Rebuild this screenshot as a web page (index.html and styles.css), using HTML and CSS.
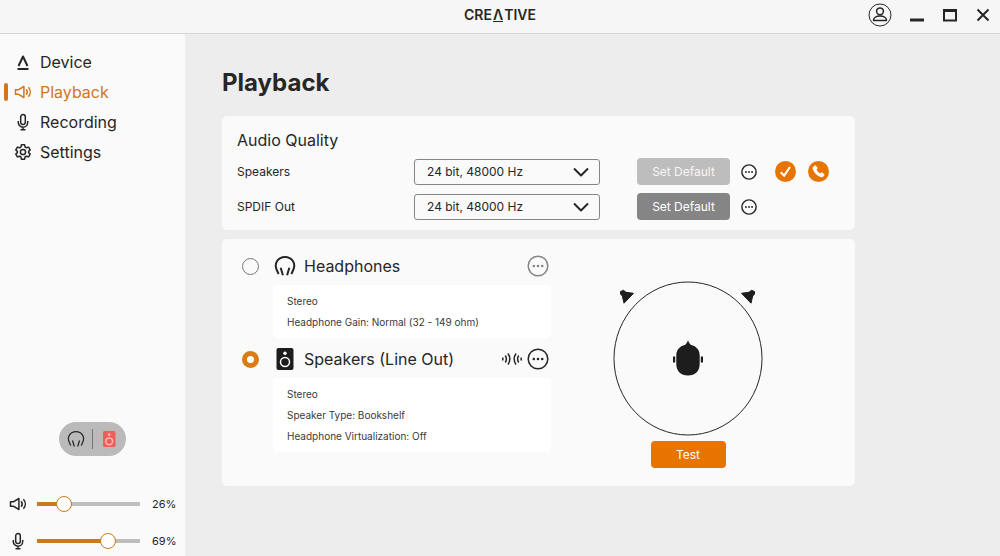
FILE: index.html
```html
<!DOCTYPE html>
<html lang="en">
<head>
  <meta charset="UTF-8" />
  <meta name="viewport" content="width=device-width, initial-scale=1.0" />
  <title>Creative - Playback</title>
  <link rel="stylesheet" href="styles.css">
</head>
<body>
  <!-- Shared icons -->
  <svg class="sprite" aria-hidden="true">
    <symbol id="icon-volume" viewBox="0 0 18 18">
      <path d="M1.500 6.700h3.200l5.200-3.200v11l-5.200-3.200H1.500z"/>
      <path d="M12.200 6.200c1.300 1.700 1.300 3.900 0 5.600M14.400 4.300c2.500 2.800 2.500 6.600 0 9.400"/>
    </symbol>
    <symbol id="icon-mic" viewBox="0 0 18 18">
      <rect x="6.700" y="1.500" width="4.600" height="10" rx="2.300"/>
      <path d="M4.300 8v1.500a4.700 4.700 0 0 0 9.400 0V8M9 14.200v2.500M6.500 16.700h5"/>
    </symbol>
    <symbol id="icon-headphones" viewBox="0 0 22 22">
      <path d="M4.600 19l-1.800-4C-.3 8.500 4 1.900 11 1.900S22.300 8.500 19.200 15l-1.800 4"/>
      <path d="M6.700 12.800l2.200 7.400M15.300 12.800l-2.200 7.400"/>
    </symbol>
    <symbol id="icon-more" viewBox="0 0 22 22">
      <circle cx="11" cy="11" r="9.800"/>
      <g fill="currentColor" stroke="none"><circle cx="6.800" cy="11" r="1.300"/><circle cx="11" cy="11" r="1.300"/><circle cx="15.200" cy="11" r="1.300"/></g>
    </symbol>
    <symbol id="icon-chevron" viewBox="0 0 16 10"><path d="M1 1.500l7 7 7-7"/></symbol>
  </svg>

  <header class="titlebar">
    <div class="logo" aria-label="Creative">CRE<span class="logo-mark">Λ</span>TIVE</div>
    <div class="window-controls">
      <button class="icon-btn" aria-label="Account">
        <svg class="icon account-icon" viewBox="0 0 24 24">
          <circle class="account-ring" cx="12" cy="12" r="11"/>
          <circle cx="12" cy="8.300" r="3.400"/>
          <path d="M5.500 17.500c0-6 13-6 13 0z"/>
        </svg>
      </button>
      <button class="icon-btn" aria-label="Minimize">
        <svg class="icon window-icon" viewBox="0 0 16 16"><path class="bold" d="M1 13h14"/></svg>
      </button>
      <button class="icon-btn" aria-label="Maximize">
        <svg class="icon window-icon" viewBox="0 0 16 16"><path d="M2 3h12v10.500H2z"/><path class="bold" d="M1 3.500h14"/></svg>
      </button>
      <button class="icon-btn" aria-label="Close">
        <svg class="icon window-icon" viewBox="0 0 16 16"><path d="M2.500 2.500l11 11M13.500 2.500l-11 11"/></svg>
      </button>
    </div>
  </header>

  <div class="app">
    <aside class="sidebar">
      <nav class="nav">
        <a class="nav-item" href="#device">
          <svg class="icon nav-icon" viewBox="0 0 18 18"><path class="bold" d="M4.500 13L9 3.500 13.500 13M3.500 16h11"/></svg>
          Device
        </a>
        <a class="nav-item active" href="#playback" aria-current="page">
          <svg class="icon nav-icon"><use href="#icon-volume"/></svg>
          Playback
        </a>
        <a class="nav-item" href="#recording">
          <svg class="icon nav-icon"><use href="#icon-mic"/></svg>
          Recording
        </a>
        <a class="nav-item" href="#settings">
          <svg class="icon nav-icon" viewBox="0 0 18 18">
            <path d="M7.400 1.800h3.200l.5 2.200 1.400.8 2.100-.7 1.600 2.800-1.600 1.500v1.200l1.600 1.500-1.600 2.800-2.100-.7-1.400.8-.5 2.200H7.400L6.900 14l-1.400-.8-2.100.7-1.600-2.800 1.600-1.500V8.400L1.800 6.900l1.600-2.800 2.100.7L6.900 4z"/>
            <circle cx="9" cy="9" r="2.600"/>
          </svg>
          Settings
        </a>
      </nav>

      <div class="sidebar-bottom">
        <div class="output-switch">
          <button class="icon-btn" aria-label="Headphones output">
            <svg class="icon switch-icon"><use href="#icon-headphones"/></svg>
          </button>
          <span class="switch-divider"></span>
          <button class="icon-btn" aria-label="Speakers output">
            <svg class="icon switch-icon" viewBox="0 0 18 18">
              <rect class="red-box" x="3" y="1" width="12.500" height="16" rx="1.500"/>
              <circle class="red-cone" cx="9.200" cy="11.300" r="3.400"/>
              <circle class="red-dot" cx="9.200" cy="4.600" r="1.300"/>
            </svg>
          </button>
        </div>
        <div class="slider-row">
          <svg class="icon nav-icon"><use href="#icon-volume"/></svg>
          <input class="slider" id="volume" type="range" min="0" max="100" value="26" aria-label="Volume" style="--value: 26%">
          <output for="volume">26%</output>
        </div>
        <div class="slider-row">
          <svg class="icon nav-icon"><use href="#icon-mic"/></svg>
          <input class="slider" id="mic" type="range" min="0" max="100" value="69" aria-label="Microphone" style="--value: 69%">
          <output for="mic">69%</output>
        </div>
      </div>
    </aside>

    <main class="content">
      <h1>Playback</h1>

      <!-- Audio quality -->
      <section class="card quality">
        <h2>Audio Quality</h2>
        <div class="quality-row">
          <label for="speakersFormat">Speakers</label>
          <div class="select-wrap">
            <select id="speakersFormat"><option>24 bit, 48000 Hz</option></select>
            <svg class="icon chevron"><use href="#icon-chevron"/></svg>
          </div>
          <button class="btn btn-muted" disabled>Set Default</button>
          <button class="icon-btn" aria-label="Speakers options"><svg class="icon more-small"><use href="#icon-more"/></svg></button>
          <div class="badges">
            <svg class="badge" viewBox="0 0 20 20" role="img" aria-label="Default device">
              <circle cx="10" cy="10" r="10"/><path class="badge-check" d="M5.500 10.800l3.200 3.200 5.600-8.300"/>
            </svg>
            <svg class="badge" viewBox="0 0 20 20" role="img" aria-label="Default communication device">
              <circle cx="10" cy="10" r="10"/>
              <path class="badge-phone" d="M4.800 5.600l1.600-1.400q.5-.4.900.1l1.600 2q.4.500 0 1l-.8 1q1.200 2.200 3.400 3.500l1-.8q.5-.4 1 0l2 1.700q.5.400.1.900l-1.300 1.500q-.7.700-1.700.4-6.200-2-8.200-8.300-.2-1 .4-1.600z"/>
            </svg>
          </div>
        </div>
        <div class="quality-row">
          <label for="spdifFormat">SPDIF Out</label>
          <div class="select-wrap">
            <select id="spdifFormat"><option>24 bit, 48000 Hz</option></select>
            <svg class="icon chevron"><use href="#icon-chevron"/></svg>
          </div>
          <button class="btn btn-gray">Set Default</button>
          <button class="icon-btn" aria-label="SPDIF Out options"><svg class="icon more-small"><use href="#icon-more"/></svg></button>
        </div>
      </section>

      <!-- Output selection -->
      <section class="card outputs">
        <div class="output-list">
          <div class="output-head">
            <input type="radio" name="output" id="headphones">
            <label for="headphones">
              <svg class="icon output-icon thick"><use href="#icon-headphones"/></svg>
              Headphones
            </label>
            <button class="icon-btn gray" aria-label="Headphones options"><svg class="icon output-icon"><use href="#icon-more"/></svg></button>
          </div>
          <div class="details">
            <p>Stereo</p>
            <p>Headphone Gain: Normal (32 - 149 ohm)</p>
          </div>

          <div class="output-head">
            <input type="radio" name="output" id="lineout" checked>
            <label for="lineout">
              <svg class="output-icon" viewBox="0 0 22 22">
                <rect x="2.500" y="0" width="17" height="22" rx="2" fill="#1d1d1d"/>
                <circle cx="11" cy="14" r="4.500" fill="none" stroke="#fff" stroke-width="1.500"/>
                <circle cx="11" cy="5.200" r="1.700" fill="#fff"/>
              </svg>
              Speakers (Line Out)
            </label>
            <svg class="icon waves" viewBox="0 0 22 16">
              <path d="M1.500 6.500q.8 1.500 0 3M4.300 4.500q2.200 3.500 0 7M7 2.500q3.700 5.500 0 11M20.500 6.500q-.8 1.500 0 3M17.700 4.500q-2.200 3.500 0 7M15 2.500q-3.700 5.500 0 11"/>
            </svg>
            <button class="icon-btn" aria-label="Speakers options"><svg class="icon output-icon"><use href="#icon-more"/></svg></button>
          </div>
          <div class="details">
            <p>Stereo</p>
            <p>Speaker Type: Bookshelf</p>
            <p>Headphone Virtualization: Off</p>
          </div>
        </div>

        <div class="stage">
          <!-- Listener seen from above with left and right speakers -->
          <svg class="stage-map" viewBox="0 0 150 155" role="img" aria-label="Speaker positions">
            <ellipse cx="75" cy="77.500" rx="74" ry="76.500" fill="none" stroke="#262626"/>
            <g id="speakerLeft" fill="#1d1d1d" stroke="#1d1d1d" stroke-linejoin="round">
              <path d="M7.500 10.500l3-1.200 2.500 2 7.500 1-9.500 9.900-1.700-7.200-1.800-2z"/>
            </g>
            <use href="#speakerLeft" transform="translate(149 0) scale(-1 1)"/>
            <g fill="#1d1d1d">
              <path d="M75 59.500q1.200 3 3 4.600c5.500 1.200 8.700 5 8.700 10.400v8.500c0 7-4.500 11.500-11.700 11.500s-11.700-4.500-11.700-11.500v-8.500c0-5.400 3.200-9.200 8.700-10.400q1.800-1.600 3-4.600z"/>
              <path d="M60 75.500h2.200v6H60zM87.800 75.500H90v6h-2.200z"/>
            </g>
          </svg>
          <button class="btn btn-orange">Test</button>
        </div>
      </section>
    </main>
  </div>

  <script>
    // Keep the filled part of each slider and its label in step with the value
    document.querySelectorAll('.slider').forEach(slider => {
      slider.addEventListener('input', () => {
        slider.style.setProperty('--value', slider.value + '%');
        slider.nextElementSibling.textContent = slider.value + '%';
      });
    });
  </script>
</body>
</html>
```

FILE: styles.css
```css
* {
  box-sizing: border-box;
}
body {
  margin: 0;
  min-height: 100vh;
  display: flex;
  flex-direction: column;
  font-family: Inter, "Open Sans", sans-serif;
  font-size: 12px;
  color: #262626;
  background-color: #ededed;
}
h1, h2, p {
  margin: 0;
}
button, select {
  font: inherit;
  color: inherit;
}
.sprite {
  position: absolute;
  width: 0;
  height: 0;
}
.icon {
  fill: none;
  stroke: currentColor;
  stroke-width: 1.5;
  stroke-linejoin: round;
  flex-shrink: 0;
}
.icon .bold {
  stroke-width: 2;
}
.icon-btn {
  display: flex;
  padding: 0;
  border: 0;
  background: none;
}
.icon-btn.gray {
  color: #858585;
}

/* Title bar */
.titlebar {
  display: grid;
  grid-template-columns: 1fr auto 1fr;
  height: 34px;
  padding: 0 9px 4px;
  align-items: center;
  background-color: #f6f6f6;
  border-bottom: 1px solid #d6d6d6;
}
.logo {
  grid-column: 2;
  font-size: 14px;
  font-weight: 600;
  line-height: 14px;
}
.logo-mark {
  display: inline-block;
  margin: 0 1px;
  line-height: 13px;
  border-bottom: 1px solid #262626;
}
.window-controls {
  display: flex;
  justify-content: flex-end;
  align-items: center;
  gap: 17px;
}
.account-icon {
  width: 24px;
  height: 24px;
}
.account-ring {
  stroke-width: 1;
}
.window-icon {
  width: 16px;
  height: 16px;
  stroke-width: 2;
  stroke-linejoin: miter;
}
.window-icon .bold {
  stroke-width: 3;
}

/* Sidebar */
.app {
  flex: 1;
  display: flex;
}
.sidebar {
  width: 185px;
  flex-shrink: 0;
  display: flex;
  flex-direction: column;
  justify-content: space-between;
  padding-top: 13px;
  background-color: #fafafa;
}
.nav-item {
  display: flex;
  align-items: center;
  height: 30px;
  font-size: 16px;
  color: inherit;
  text-decoration: none;
}
.nav-item::before {
  content: "";
  width: 4px;
  height: 18px;
  margin: 0 6px 0 4px;
  border-radius: 2px;
}
.nav-item.active {
  color: #d2761c;
}
.nav-item.active::before {
  background-color: #d2761c;
}
.nav-icon {
  width: 18px;
  height: 18px;
  margin-right: 8px;
}
.output-switch {
  display: flex;
  align-items: center;
  justify-content: center;
  gap: 7px;
  width: 67px;
  height: 34px;
  margin: 0 auto 33px;
  border-radius: 17px;
  background-color: #bababa;
}
.switch-icon {
  width: 18px;
  height: 18px;
}
.switch-divider {
  width: 1px;
  height: 20px;
  background-color: #777;
}
.red-box {
  fill: #f45b5b;
  stroke: none;
}
.red-cone {
  stroke: #ffb9b9;
}
.red-dot {
  fill: #ffb9b9;
  stroke: none;
}
.slider-row {
  display: flex;
  align-items: center;
  height: 30px;
  padding: 0 9px;
}
.slider-row + .slider-row {
  margin-top: 7px;
}
.slider-row .nav-icon {
  margin-right: 3px;
}
.slider-row output {
  width: 24px;
  margin-left: 5px;
  font-size: 11px;
}
/* The line is inset by half a thumb, so the thumb centre sits on the value */
.slider {
  appearance: none;
  flex: 1;
  min-width: 0;
  height: 16px;
  margin: 0;
  background:
    linear-gradient(to right, #c87a20 var(--value), #bdbdbd var(--value))
    center / calc(100% - 14px) 4px no-repeat;
}
.slider::-webkit-slider-thumb {
  appearance: none;
  width: 16px;
  height: 16px;
  border: 1px solid #c87a20;
  border-radius: 50%;
  background-color: #fff;
}
.slider::-moz-range-thumb {
  width: 14px;
  height: 14px;
  border: 1px solid #c87a20;
  border-radius: 50%;
  background-color: #fff;
}

/* Content */
.content {
  flex: 1;
  padding: 34px 37px 20px;
}
h1 {
  margin-bottom: 18px;
  font-size: 24px;
  line-height: 30px;
}
.card {
  max-width: 633px;
  border-radius: 5px;
  background-color: #fafafa;
}
.card + .card {
  margin-top: 9px;
}
.quality {
  padding: 14px 15px 10px;
}
.quality h2 {
  margin-bottom: 8px;
  font-size: 16px;
  font-weight: 400;
  line-height: 20px;
}
.quality-row {
  display: grid;
  grid-template-columns: 177px 186px 37px 93px 11px 16px 1fr;
  align-items: center;
  height: 27px;
}
.quality-row + .quality-row {
  margin-top: 8px;
}
.quality-row .btn {
  grid-column: 4;
}
.quality-row .icon-btn {
  grid-column: 6;
}
.select-wrap {
  display: grid;
  align-items: center;
}
.select-wrap > * {
  grid-area: 1 / 1;
}
.select-wrap select {
  appearance: none;
  height: 26px;
  padding: 0 30px 0 12px;
  border: 1px solid #858585;
  border-radius: 3px;
  background-color: #fafafa;
}
.chevron {
  width: 16px;
  height: 10px;
  margin-right: 11px;
  justify-self: end;
  stroke-width: 2;
  pointer-events: none;
}
.btn {
  height: 27px;
  border: 0;
  border-radius: 4px;
  color: #fff;
}
.btn-muted {
  color: #f6f6f6;
  background-color: #bdbdbd;
}
.btn-gray {
  background-color: #858585;
}
.btn-orange {
  width: 75px;
  background-color: #e87400;
}
.more-small {
  width: 16px;
  height: 16px;
  stroke-width: 2;
}
.badges {
  display: flex;
  gap: 12px;
  margin-left: 18px;
}
.badge {
  width: 21px;
  height: 21px;
  fill: #e87400;
}
.badge-check {
  fill: none;
  stroke: #fff;
  stroke-width: 2;
}
.badge-phone {
  fill: #fff;
}

/* Outputs */
.outputs {
  display: flex;
  padding: 15px 30px 18px 20px;
}
.output-list {
  width: 309px;
  flex-shrink: 0;
}
.output-head {
  display: flex;
  align-items: center;
  height: 24px;
  margin-bottom: 7px;
  padding-right: 2px;
}
.output-head label {
  display: flex;
  align-items: center;
  gap: 8px;
  flex: 1;
  font-size: 16px;
}
.output-head input {
  appearance: none;
  width: 17px;
  height: 17px;
  margin: 0 15px 0 0;
  border: 1px solid #777;
  border-radius: 50%;
}
.output-head input:checked {
  border: 5px solid #dc7a14;
  background-color: #fff;
}
.output-icon {
  width: 22px;
  height: 22px;
}
.thick {
  stroke-width: 2;
}
.waves {
  width: 22px;
  height: 16px;
  margin-right: 4px;
}
.details {
  margin-left: 31px;
  padding: 6px 14px 5px;
  border-radius: 4px;
  background-color: #fff;
  font-size: 10px;
  line-height: 21px;
  color: #3a3a3a;
}
.details + .output-head {
  margin-top: 9px;
}
.stage {
  flex: 1;
  display: flex;
  flex-direction: column;
  align-items: center;
  padding-top: 27px;
}
.stage-map {
  width: 150px;
  height: 155px;
  margin-bottom: 5px;
  overflow: visible;
}
```
